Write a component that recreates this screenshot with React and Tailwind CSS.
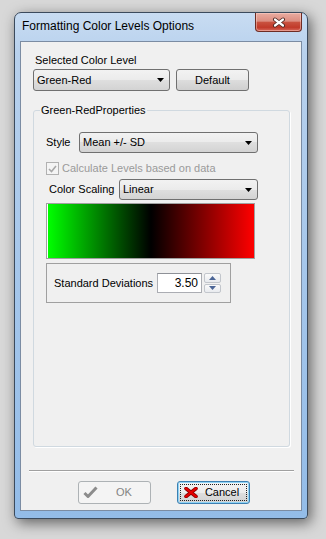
import React from "react";

function Arrow() {
  return (
    <svg width="7" height="4" viewBox="0 0 7 4">
      <path d="M0 0H7L3.5 4Z" fill="#000" />
    </svg>
  );
}

function Combo({ value, className }) {
  return (
    <div
      className={
        "flex items-center justify-between rounded-[3px] border border-[#707070] bg-[linear-gradient(#f2f2f2_0%,#ebebeb_50%,#dfdfdf_50%,#d3d3d3_100%)] pl-[3px] pr-[5px] " +
        className
      }
    >
      <span>{value}</span>
      <Arrow />
    </div>
  );
}

function CloseButton() {
  return (
    <div className="mr-[5px] flex h-[19px] w-[47px] items-center justify-center rounded-b-[4px] border border-t-0 border-[#6e2c24] bg-[linear-gradient(#e9aca1_0%,#dc8e81_45%,#c9513f_52%,#c13a2a_80%,#d7695c_100%)] shadow-[inset_0_0_0_1px_rgba(255,220,210,0.45)]">
      <svg width="14" height="11" viewBox="0 0 14 11">
        <path d="M3 2.5L11 8.5M11 2.5L3 8.5" stroke="#4a2520" strokeWidth="4" strokeLinecap="round" />
        <path d="M3 2.5L11 8.5M11 2.5L3 8.5" stroke="#ffffff" strokeWidth="2.2" strokeLinecap="round" />
      </svg>
    </div>
  );
}

export default function App() {
  return (
    <div className="h-[539px] w-[326px] bg-[#d8d8d8] pl-[14px] pt-[12px] font-['Liberation_Sans',Arial,sans-serif] text-[11px] leading-[13px] text-black">
      <div className="flex h-[507px] w-[294px] flex-col rounded-b-[4px] rounded-t-[7px] border border-[#3b4a5c] bg-[linear-gradient(to_bottom,#c8dcf2_0%,#b8d1ed_8%,#a6c7eb_50%,#93bce8_100%)] shadow-[3px_4px_14px_rgba(0,0,0,0.55)]">
        {/* title bar */}
        <div className="flex h-[28px] shrink-0 justify-between">
          <div className="pl-[7px] pt-[6px] text-[12px] leading-[14px] text-black">
            Formatting Color Levels Options
          </div>
          <CloseButton />
        </div>

        {/* client area */}
        <div className="mx-[5px] flex h-[470px] flex-col border border-[#7b8ca3] bg-[#f0f0f0]">
          <div className="pl-[14px] pt-[12px]">Selected Color Level</div>
          <div className="ml-[12px] mt-[2px] flex gap-[6px]">
            <Combo value="Green-Red" className="h-[22px] w-[137px]" />
            <div className="flex h-[22px] w-[73px] items-center justify-center rounded-[3px] border border-[#707070] bg-[linear-gradient(#f2f2f2_0%,#ebebeb_50%,#dddddd_50%,#cfcfcf_100%)]">
              Default
            </div>
          </div>

          <fieldset className="ml-[12px] mt-[13px] h-[343px] w-[257px] rounded-[3px] border border-[#d0d9e0] shadow-[1px_1px_0_#ffffff]">
            <legend className="ml-[6px] px-[1px] leading-[13px]">Green-RedProperties</legend>
            <div className="flex flex-col pl-[12px]">
              <div className="mt-[15px] flex h-[21px] items-center">
                <span className="w-[33px]">Style</span>
                <Combo value="Mean +/- SD" className="h-[21px] w-[179px]" />
              </div>

              <div className="mt-[9px] flex h-[13px] items-center gap-[3px]">
                <div className="flex h-[13px] w-[13px] items-center justify-center border border-[#b1b1b1] bg-[#f4f4f4]">
                  <svg width="9" height="8" viewBox="0 0 9 8">
                    <path d="M1 4L3.5 6.5L8 1" stroke="#a8a8a8" strokeWidth="1.6" fill="none" />
                  </svg>
                </div>
                <span className="text-[#9a9a9a]">Calculate Levels based on data</span>
              </div>

              <div className="mt-[4px] flex h-[21px] items-center">
                <span className="w-[73px] pl-[3px]">Color Scaling</span>
                <Combo value="Linear" className="h-[21px] w-[139px]" />
              </div>

              <div className="mt-[3px] h-[56px] w-[209px] border border-[#a0a0a0]">
                <div className="h-full w-full border-l border-white bg-[linear-gradient(to_right,#00ff00_0%,#000000_50%,#ff0000_100%)]" />
              </div>

              <div className="mt-[4px] flex h-[40px] w-[185px] items-center border border-[#a0a0a0] pl-[7px]">
                <span className="w-[103px]">Standard Deviations</span>
                <div className="flex h-[20px] w-[45px] items-center justify-end border border-[#abadb3] border-t-[#8e9197] bg-white pr-[3px] text-[12px]">
                  3.50
                </div>
                <div className="ml-[2px] flex h-[20px] w-[17px] flex-col gap-[1px]">
                  <div className="flex flex-1 items-center justify-center rounded-[2px] border border-[#c2c6cc] bg-[linear-gradient(#fbfbfb,#e8eaee)]">
                    <svg width="7" height="4" viewBox="0 0 7 4">
                      <path d="M0 4H7L3.5 0Z" fill="#4b6596" />
                    </svg>
                  </div>
                  <div className="flex flex-1 items-center justify-center rounded-[2px] border border-[#c2c6cc] bg-[linear-gradient(#fbfbfb,#e8eaee)]">
                    <svg width="7" height="4" viewBox="0 0 7 4">
                      <path d="M0 0H7L3.5 4Z" fill="#4b6596" />
                    </svg>
                  </div>
                </div>
              </div>
            </div>
          </fieldset>

          <div className="ml-[8px] mt-[23px] h-[2px] w-[265px] border-b border-t border-b-white border-t-[#a0a0a0]" />

          <div className="ml-[57px] mt-[9px] flex gap-[26px]">
            <div className="flex h-[23px] w-[73px] items-center rounded-[3px] border border-[#adb2b5] bg-[#f4f4f4] pl-[4px]">
              <svg width="15" height="13" viewBox="0 0 15 13">
                <path d="M1.5 7L5 10.5L13.5 1.5" stroke="#8c8c8c" strokeWidth="3" fill="none" strokeLinejoin="round" />
              </svg>
              <span className="flex-1 text-center text-[#838383]">OK</span>
            </div>
            <div className="flex h-[23px] w-[73px] rounded-[3px] border border-[#3c7fb1] bg-[linear-gradient(#f4f4f4_0%,#ececec_50%,#dedede_50%,#d2d2d2_100%)] p-[2px] shadow-[inset_0_0_0_1px_#8fd3f5]">
              <div className="flex flex-1 items-center border border-dotted border-[#222] pl-[3px]">
                <svg width="14" height="11" viewBox="0 0 14 11">
                  <path d="M2 1.5L12 9.5M12 1.5L2 9.5" stroke="#8a0000" strokeWidth="3.6" strokeLinecap="round" />
                  <path d="M2 1.5L12 9.5M12 1.5L2 9.5" stroke="#e60000" strokeWidth="2.2" strokeLinecap="round" />
                </svg>
                <span className="flex-1 text-center">Cancel</span>
              </div>
            </div>
          </div>
        </div>
      </div>
    </div>
  );
}
